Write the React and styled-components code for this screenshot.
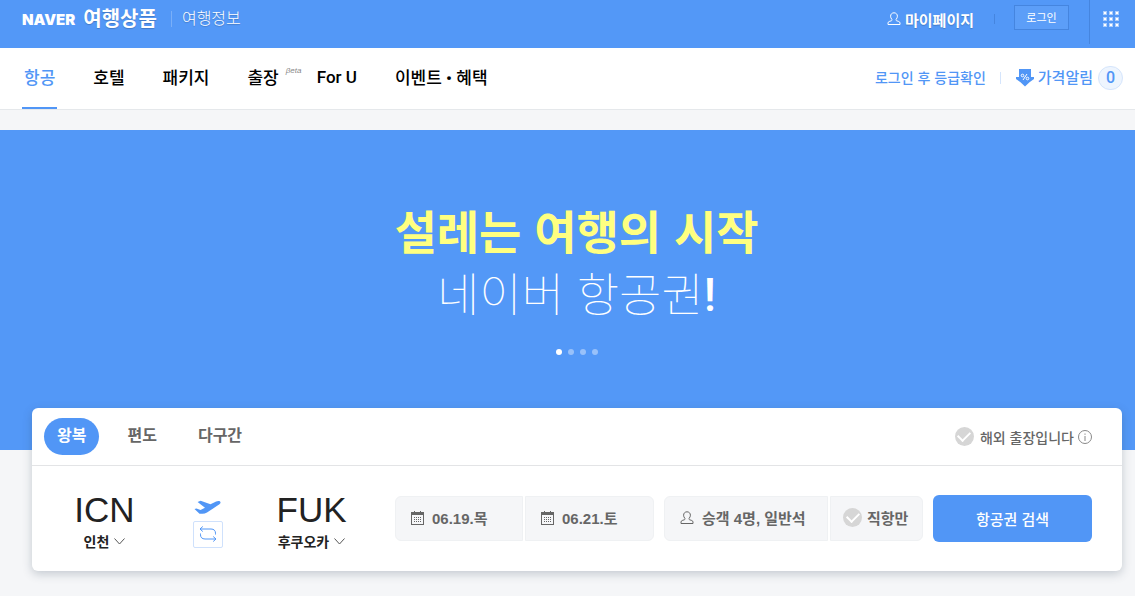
import styled, { createGlobalStyle } from "styled-components";

const GlobalStyle = createGlobalStyle`
    * {
        box-sizing: border-box;
    }

    body {
        margin: 0;
        background-color: #F5F6F8;
        font-family: "Liberation Sans", "Noto Sans CJK KR", sans-serif;
        color: #222222;
    }

    button {
        border: 0;
        padding: 0;
        background: none;
        font-family: inherit;
        color: inherit;
        cursor: pointer;
    }

    a {
        color: inherit;
        text-decoration: none;
    }

    svg {
        display: block;
        flex: none;
    }
`

const menus = [
    { name: "항공", active: true },
    { name: "호텔" },
    { name: "패키지" },
    { name: "출장", beta: true },
    { name: "For U" },
    { name: "이벤트 • 혜택" },
]

const trips = ["왕복", "편도", "다구간"]

function UserIcon() {
    return (
        <svg width="14" height="14" viewBox="0 0 14 14" fill="none" stroke="currentColor" strokeLinejoin="round">
            <path d="M1 12.500v-1.400c0-.8.400-1.300 1.200-1.600l2.300-.8c.6-.3.7-.9.3-1.400C4 6.300 3.600 5.300 3.600 4.200 3.600 2.200 5 .8 7 .8s3.400 1.400 3.400 3.400c0 1.100-.4 2.100-1.200 3.100-.4.5-.3 1.100.3 1.400l2.300.8c.8.3 1.200.8 1.200 1.600v1.400z" />
        </svg>
    )
}

function CalendarIcon() {
    return (
        <svg width="13" height="14" viewBox="0 0 13 14">
            <path fill="currentColor" fillRule="evenodd" d="M0 1h3V0h1v1h5V0h1v1h3v13H0zM1 4v9h11V4z" />
            <path fill="currentColor" d="M3 6h1v1H3zM5 6h1v1H5zM7 6h1v1H7zM9 6h1v1H9zM3 8h1v1H3zM5 8h1v1H5zM7 8h1v1H7zM9 8h1v1H9zM3 10h1v1H3zM5 10h1v1H5zM7 10h1v1H7zM9 10h1v1H9z" />
        </svg>
    )
}

function AppsIcon() {
    const dots = [0, 6, 12]
    return (
        <svg width="16" height="16" viewBox="0 0 16 16">
            {dots.map((y) => dots.map((x) => (
                <g key={x + "-" + y}>
                    <rect x={x} y={y} width="4" height="4" fill="#A9CBFB" />
                    <rect x={x + 1} y={y + 1} width="2" height="2" fill="#FFFFFF" />
                </g>
            )))}
        </svg>
    )
}

function PriceIcon() {
    return (
        <svg width="18" height="18" viewBox="0 0 18 18">
            <path fill="#5196F6" d="M3 0h12v8h3v2l-4.500 3.300L9 17.500l-4.500-4.200L0 10V8h3z" />
            <g fill="none" stroke="#FFFFFF">
                <circle cx="6.500" cy="6.500" r="1.300" />
                <circle cx="11.500" cy="9.500" r="1.300" />
                <path d="M11 5 7 11" />
            </g>
        </svg>
    )
}

function PlaneIcon() {
    return (
        <svg width="27" height="14" viewBox="0 0 27 14" fill="#5196F6">
            <path d="M.5 9 2.500 8.500 6.500 10l4.500-2.200L3.600 2 6.600.7l9.900 3.500 5.600-2.600c2-.9 4.200-.6 4.400.7.2 1-.8 1.900-2.200 2.700L13 12.600c-1.500.8-3 1.200-4.600 1.200H5.500z" />
        </svg>
    )
}

function SwapIcon() {
    return (
        <svg width="18" height="16" viewBox="0 0 18 16" fill="none" stroke="#5196F6">
            <path d="M3.800.5 1 3l2.800 2.500M1 3h11c3 0 4.500 1.700 4.500 4.200v1.300M14.200 10.500 17 13l-2.800 2.500M17 13H6c-3 0-4.500-1.700-4.500-4.200V7.500" />
        </svg>
    )
}

function ChevronIcon() {
    return (
        <svg width="11" height="7" viewBox="0 0 11 7" fill="none" stroke="#555555">
            <path d="m.5.5 5 5.500 5-5.500" />
        </svg>
    )
}

function InfoIcon() {
    return (
        <svg width="14" height="14" viewBox="0 0 14 14" fill="none" stroke="#888888">
            <circle cx="7" cy="7" r="6.500" />
            <path d="M7 6v5M7 3.500v1.300" />
        </svg>
    )
}

export default function App() {
    return (
        <>
            <GlobalStyle />
            <TopBar>
                <Logo href="#">NAVER</Logo>
                <Service href="#">여행상품</Service>
                <Bar $height={16} $color="#79AFF9" />
                <Info href="#">여행정보</Info>
                <MyPage href="#"><UserIcon />마이페이지</MyPage>
                <Bar $height={10} $color="#4585DF" />
                <Login>로그인</Login>
                <Apps aria-label="서비스 더보기"><AppsIcon /></Apps>
            </TopBar>

            <NavBar>
                {menus.map((menu) => (
                    <Menu href="#" key={menu.name} $active={menu.active}>
                        {menu.name}
                        {menu.beta && <Beta>βeta</Beta>}
                    </Menu>
                ))}
                <NavRight>
                    <Grade href="#">로그인 후 등급확인</Grade>
                    <Bar $height={12} $color="#D5E5FC" />
                    <Alarm href="#"><PriceIcon /><span>가격알림</span></Alarm>
                    <Count>0</Count>
                </NavRight>
            </NavBar>

            <Hero>
                <Title>설레는 여행의 시작</Title>
                <SubTitle>네이버 항공권<b>!</b></SubTitle>
                <Pager>
                    {[1, 2, 3, 4].map((n) => <Dot key={n} aria-label={n + "번 배너"} $active={n === 1} />)}
                </Pager>
            </Hero>

            <Card>
                <CardTop>
                    {trips.map((trip, i) => <Trip key={trip} $active={i === 0}>{trip}</Trip>)}
                    <Business>
                        <Check type="checkbox" />
                        해외 출장입니다
                    </Business>
                    <button aria-label="안내"><InfoIcon /></button>
                </CardTop>
                <Search>
                    <Route>
                        <Airport>
                            <strong>ICN</strong>
                            <span>인천<ChevronIcon /></span>
                        </Airport>
                        <Middle>
                            <PlaneIcon />
                            <Swap aria-label="출발지 도착지 변경"><SwapIcon /></Swap>
                        </Middle>
                        <Airport>
                            <strong>FUK</strong>
                            <span>후쿠오카<ChevronIcon /></span>
                        </Airport>
                    </Route>
                    <Group $size={259}>
                        <Field $size={128}><CalendarIcon />06.19.목</Field>
                        <Field $size={129}><CalendarIcon />06.21.토</Field>
                    </Group>
                    <Group $size={259}>
                        <Field $size={164}><UserIcon />승객 4명, 일반석</Field>
                        <Direct $size={93}><Check type="checkbox" />직항만</Direct>
                    </Group>
                    <Submit>항공권 검색</Submit>
                </Search>
            </Card>
        </>
    )
}

const TopBar = styled.header`
    display: flex;
    align-items: center;
    height: 48px;
    padding: 0 0 10px 22px;
    background-color: #5398F7;
    color: #FFFFFF;
`

const Bar = styled.span`
    flex: none;
    width: 1px;
    height: ${(props) => props.$height}px;
    background-color: ${(props) => props.$color};
`

const Logo = styled.a`
    font-family: Inter, sans-serif;
    font-size: 15px;
    font-weight: 900;
    margin-right: 8px;
`

const Service = styled.a`
    font-size: 20px;
    line-height: 24px;
    font-weight: 700;
    margin-right: 14px;
    text-shadow: 0 1px 1px rgba(0, 0, 0, 0.2);
`

const Info = styled.a`
    font-size: 16px;
    line-height: 24px;
    font-weight: 300;
    margin-left: 10px;
    text-shadow: 0 1px 1px rgba(0, 0, 0, 0.2);
`

const MyPage = styled.a`
    display: flex;
    align-items: center;
    gap: 4px;
    margin-left: auto;
    margin-right: 20px;
    font-size: 15px;
    font-weight: 700;
    text-shadow: 0 1px 1px rgba(0, 0, 0, 0.2);
`

const Login = styled.button`
    width: 55px;
    height: 25px;
    margin: 0 20px 4px 19px;
    border: 1px solid #4585DF;
    background-color: #5C9EF8;
    font-size: 11px;
`

const Apps = styled.button`
    align-self: flex-start;
    display: flex;
    justify-content: center;
    width: 46px;
    height: 44px;
    padding: 11px 4px 0 0;
    border-left: 1px solid #4585DF;
`

const NavBar = styled.nav`
    display: flex;
    align-items: center;
    height: 62px;
    padding: 0 12px 0 22px;
    background-color: #FFFFFF;
    border-bottom: 1px solid #E5E8EB;
    color: #5196F6;
`

const Menu = styled.a`
    display: flex;
    align-items: center;
    height: 61px;
    padding: 0 2px 2px;
    margin-right: 34px;
    border-bottom: 2px solid ${(props) => props.$active ? "#5196F6" : "transparent"};
    color: ${(props) => props.$active ? "#5196F6" : "#000000"};
    font-family: Roboto, "Noto Sans CJK KR", sans-serif;
    font-size: 17px;
    font-weight: 500;
    white-space: nowrap;
`

const Beta = styled.sup`
    width: 0;
    padding-left: 7px;
    margin: 0 -7px 12px 0;
    color: #888888;
    font-family: "Liberation Sans", sans-serif;
    font-size: 8px;
    font-style: italic;
    font-weight: 400;
`

const NavRight = styled.div`
    display: flex;
    align-items: center;
    margin-left: auto;
    padding-bottom: 2px;
`

const Grade = styled.a`
    margin-right: 14px;
    padding-bottom: 2px;
    font-size: 14px;
    font-weight: 500;
`

const Alarm = styled.a`
    display: flex;
    align-items: center;
    gap: 4px;
    margin: 0 5px 0 15px;
    font-size: 15px;
    font-weight: 500;

    span {
        padding-bottom: 2px;
    }
`

const Count = styled.span`
    width: 25px;
    height: 24px;
    border: 1px solid #D5E5FC;
    border-radius: 12px;
    background-color: #EEF5FE;
    font-family: Roboto, sans-serif;
    font-size: 16px;
    font-weight: 500;
    line-height: 22px;
    text-align: center;
`

const Hero = styled.section`
    display: flex;
    flex-direction: column;
    align-items: center;
    height: 320px;
    margin-top: 20px;
    padding: 72px 0 0 18px;
    background-color: #5398F7;
    color: #FFFFFF;
`

const Title = styled.h1`
    margin: 0;
    color: #FFFF80;
    font-size: 46px;
    line-height: 62px;
    font-weight: 700;
`

const SubTitle = styled.p`
    margin: 0;
    font-size: 46px;
    line-height: 62px;
    font-weight: 100;

    b {
        font-family: Roboto, sans-serif;
        font-weight: 500;
    }
`

const Pager = styled.div`
    display: flex;
    gap: 6px;
    margin-top: 23px;
`

const Dot = styled.button`
    width: 6px;
    height: 6px;
    border-radius: 50%;
    background-color: ${(props) => props.$active ? "#FFFFFF" : "#98C1FA"};
`

const Card = styled.section`
    position: relative;
    margin: -42px 13px 24px 32px;
    border-radius: 6px;
    background-color: #FFFFFF;
    box-shadow: 0 3px 10px rgba(50, 70, 90, 0.25);
`

const CardTop = styled.div`
    display: flex;
    align-items: center;
    height: 58px;
    padding: 0 30px 0 12px;
    border-bottom: 1px solid #E3E4E6;
`

const Trip = styled.button`
    height: 37px;
    padding: 0 13px 5px;
    margin-right: 15px;
    border-radius: 19px;
    background-color: ${(props) => props.$active ? "#5196F6" : "transparent"};
    color: ${(props) => props.$active ? "#FFFFFF" : "#666666"};
    font-size: 16px;
    font-weight: 700;
`

const Business = styled.label`
    display: flex;
    align-items: center;
    gap: 6px;
    margin-left: auto;
    margin-right: 4px;
    color: #666666;
    font-size: 14px;
    font-weight: 500;
`

const Check = styled.input`
    appearance: none;
    display: grid;
    place-content: center;
    width: 19px;
    height: 19px;
    margin: 0;
    border-radius: 50%;
    background-color: #D6D6D6;

    &::after {
        content: "";
        width: 10px;
        height: 6px;
        margin-bottom: 3px;
        border: solid #FFFFFF;
        border-width: 0 0 2px 2px;
        transform: rotate(-45deg);
    }

    &:checked {
        background-color: #5196F6;
    }
`

const Search = styled.div`
    display: flex;
    align-items: center;
    gap: 10px;
    height: 105px;
    padding-right: 30px;
`

const Route = styled.div`
    display: grid;
    grid-template-columns: 145px 61px 147px;
    align-items: center;
    padding-top: 6px;
`

const Airport = styled.button`
    display: flex;
    flex-direction: column;
    align-items: center;

    strong {
        font-size: 35px;
        line-height: 40px;
        font-weight: 400;
    }

    span {
        display: flex;
        align-items: center;
        gap: 5px;
        font-size: 14px;
        line-height: 24px;
        font-weight: 700;
    }
`

const Middle = styled.div`
    display: flex;
    flex-direction: column;
    align-items: center;
    gap: 7px;
    padding-top: 4px;
`

const Swap = styled.button`
    display: grid;
    place-items: center;
    width: 30px;
    height: 27px;
    border: 1px solid #CFE1FC;
    border-radius: 2px;
`

const Group = styled.div`
    display: flex;
    flex: 1 1 ${(props) => props.$size}px;
    gap: 2px;

    > :first-child {
        border-radius: 6px 0 0 6px;
    }

    > :last-child {
        border-radius: 0 6px 6px 0;
    }
`

const Field = styled.button`
    display: flex;
    align-items: center;
    flex: 1 1 ${(props) => props.$size}px;
    gap: 8px;
    height: 45px;
    padding: 0 0 2px 15px;
    border: 1px solid #EFF1F3;
    background-color: #F5F6F8;
    color: #666666;
    font-size: 15px;
    font-weight: 700;
    white-space: nowrap;
`

const Direct = styled(Field).attrs({ as: "label" })`
    gap: 5px;
    padding-left: 12px;
`

const Submit = styled.button`
    flex: 1 1 159px;
    height: 47px;
    border-radius: 6px;
    background-color: #5196F6;
    color: #FFFFFF;
    font-size: 15px;
    font-weight: 500;
`
